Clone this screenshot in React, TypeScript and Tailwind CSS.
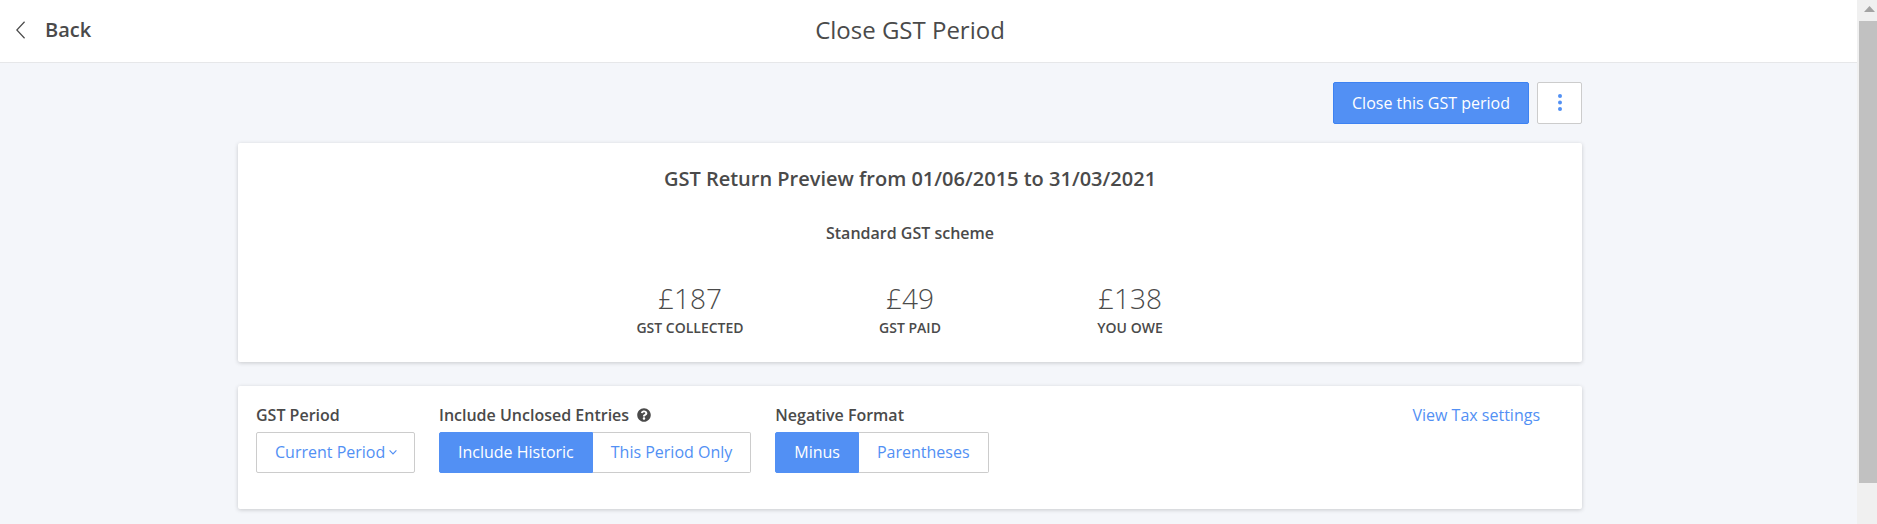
import { useState } from "react";
import { FaQuestionCircle } from "react-icons/fa";

const totals = [
    { label: "GST Collected", value: "£187" },
    { label: "GST Paid", value: "£49" },
    { label: "You Owe", value: "£138" },
];

type SegmentedProps = {
    name: string;
    legend: string;
    options: string[];
    help?: boolean;
};

function Segmented({ name, legend, options, help }: SegmentedProps) {
    const [selected, setSelected] = useState(options[0]);

    return (
        <fieldset>
            <legend className="flex items-center gap-2 font-semibold leading-6">
                {legend}
                {help && <FaQuestionCircle size={14} />}
            </legend>
            <div className="mt-[5px] flex">
                {options.map((option) => (
                    <label
                        key={option}
                        className="flex h-[41px] cursor-pointer items-center border border-[#cccccc] px-[18px] pb-0.5 text-[#5290f4] not-first:border-l-0 first:rounded-l-xs last:rounded-r-xs has-checked:border-[#5290f4] has-checked:bg-[#5290f4] has-checked:text-white"
                    >
                        <input
                            type="radio"
                            name={name}
                            value={option}
                            checked={selected === option}
                            onChange={() => setSelected(option)}
                            className="sr-only"
                        />
                        {option}
                    </label>
                ))}
            </div>
        </fieldset>
    );
}

function Header() {
    return (
        <header className="grid h-[63px] grid-cols-[1fr_auto_1fr] items-center border-b border-[#e6e7e9] bg-white pr-[53px] pb-[3px] pl-4">
            <a href="#back" className="flex items-center gap-5 justify-self-start text-xl font-semibold leading-7">
                <svg width="9" height="18" viewBox="0 0 9 18" fill="none" stroke="currentColor" strokeWidth="1.3" aria-hidden="true">
                    <path d="M8.600 0.800 0.800 9l7.800 8.200" />
                </svg>
                Back
            </a>
            <h1 className="text-2xl leading-8">Close GST Period</h1>
        </header>
    );
}

function Summary() {
    return (
        <section className="mt-[19px] rounded-xs bg-white pt-5 pb-6 text-center shadow-[0_1px_4px_rgba(0,0,0,0.18)]">
            <h2 className="text-xl font-semibold leading-8">GST Return Preview from 01/06/2015 to 31/03/2021</h2>
            <p className="mt-6 font-semibold leading-7">Standard GST scheme</p>
            <dl className="mx-auto mt-[31px] grid w-[660px] grid-cols-3">
                {totals.map((total) => (
                    <div key={total.label} className="flex flex-col-reverse">
                        <dt className="text-sm font-semibold uppercase leading-5">{total.label}</dt>
                        <dd className="text-[28px] font-light leading-10">{total.value}</dd>
                    </div>
                ))}
            </dl>
        </section>
    );
}

function Filters() {
    return (
        <section className="mt-6 flex items-start gap-6 rounded-xs bg-white pt-[17px] pr-[42px] pb-9 pl-[18px] shadow-[0_1px_4px_rgba(0,0,0,0.18)]">
            <div>
                <label htmlFor="gst-period" className="block font-semibold leading-6">
                    GST Period
                </label>
                <div className="relative mt-[5px]">
                    <select
                        id="gst-period"
                        className="h-[41px] w-[159px] cursor-pointer appearance-none rounded-xs border border-[#cccccc] bg-white pb-0.5 pl-[18px] text-[#5290f4]"
                    >
                        <option>Current Period</option>
                    </select>
                    <svg
                        className="pointer-events-none absolute top-4 right-[18px] text-[#5290f4]"
                        width="8"
                        height="8"
                        viewBox="0 0 8 8"
                        fill="none"
                        stroke="currentColor"
                        strokeWidth="1.2"
                        aria-hidden="true"
                    >
                        <path d="M0.6 2.4 4 5.8l3.4-3.4" />
                    </svg>
                </div>
            </div>
            <Segmented name="entries" legend="Include Unclosed Entries" options={["Include Historic", "This Period Only"]} help />
            <Segmented name="negative" legend="Negative Format" options={["Minus", "Parentheses"]} />
            <a href="#tax-settings" className="ml-auto leading-6 text-[#5290f4]">
                View Tax settings
            </a>
        </section>
    );
}

function Scrollbar() {
    return (
        <div className="flex w-5 shrink-0 flex-col bg-[#f0f0f0] pl-0.5" aria-hidden="true">
            <svg className="h-[21px] w-full shrink-0" viewBox="0 0 18 21" fill="#a3a3a3">
                <path d="M5 12 10.500 6 16 12z" />
            </svg>
            <div className="h-[462px] bg-[#c1c1c1]" />
        </div>
    );
}

export default function App() {
    return (
        <div className="flex h-screen overflow-hidden bg-[#f4f6fa] font-['Open_Sans',sans-serif] text-base text-[#4a4a4a]">
            <div className="min-w-0 flex-1">
                <Header />
                <main className="pt-[19px] pr-[37px]">
                    <div className="mx-auto max-w-[1344px]">
                        <div className="flex justify-end gap-2">
                            <button type="button" className="h-[42px] rounded-xs border border-[#3d82f2] bg-[#5290f4] px-[18px] text-white">
                                Close this GST period
                            </button>
                            <button
                                type="button"
                                aria-label="More actions"
                                className="flex h-[42px] w-[45px] items-center justify-center rounded-xs border border-[#cccccc] bg-white text-[#5290f4]"
                            >
                                <svg width="4" height="18" viewBox="0 0 4 18" fill="currentColor">
                                    <circle cx="2" cy="2" r="2" />
                                    <circle cx="2" cy="8.500" r="2" />
                                    <circle cx="2" cy="15" r="2" />
                                </svg>
                            </button>
                        </div>
                        <Summary />
                        <Filters />
                    </div>
                </main>
            </div>
            <Scrollbar />
        </div>
    );
}
